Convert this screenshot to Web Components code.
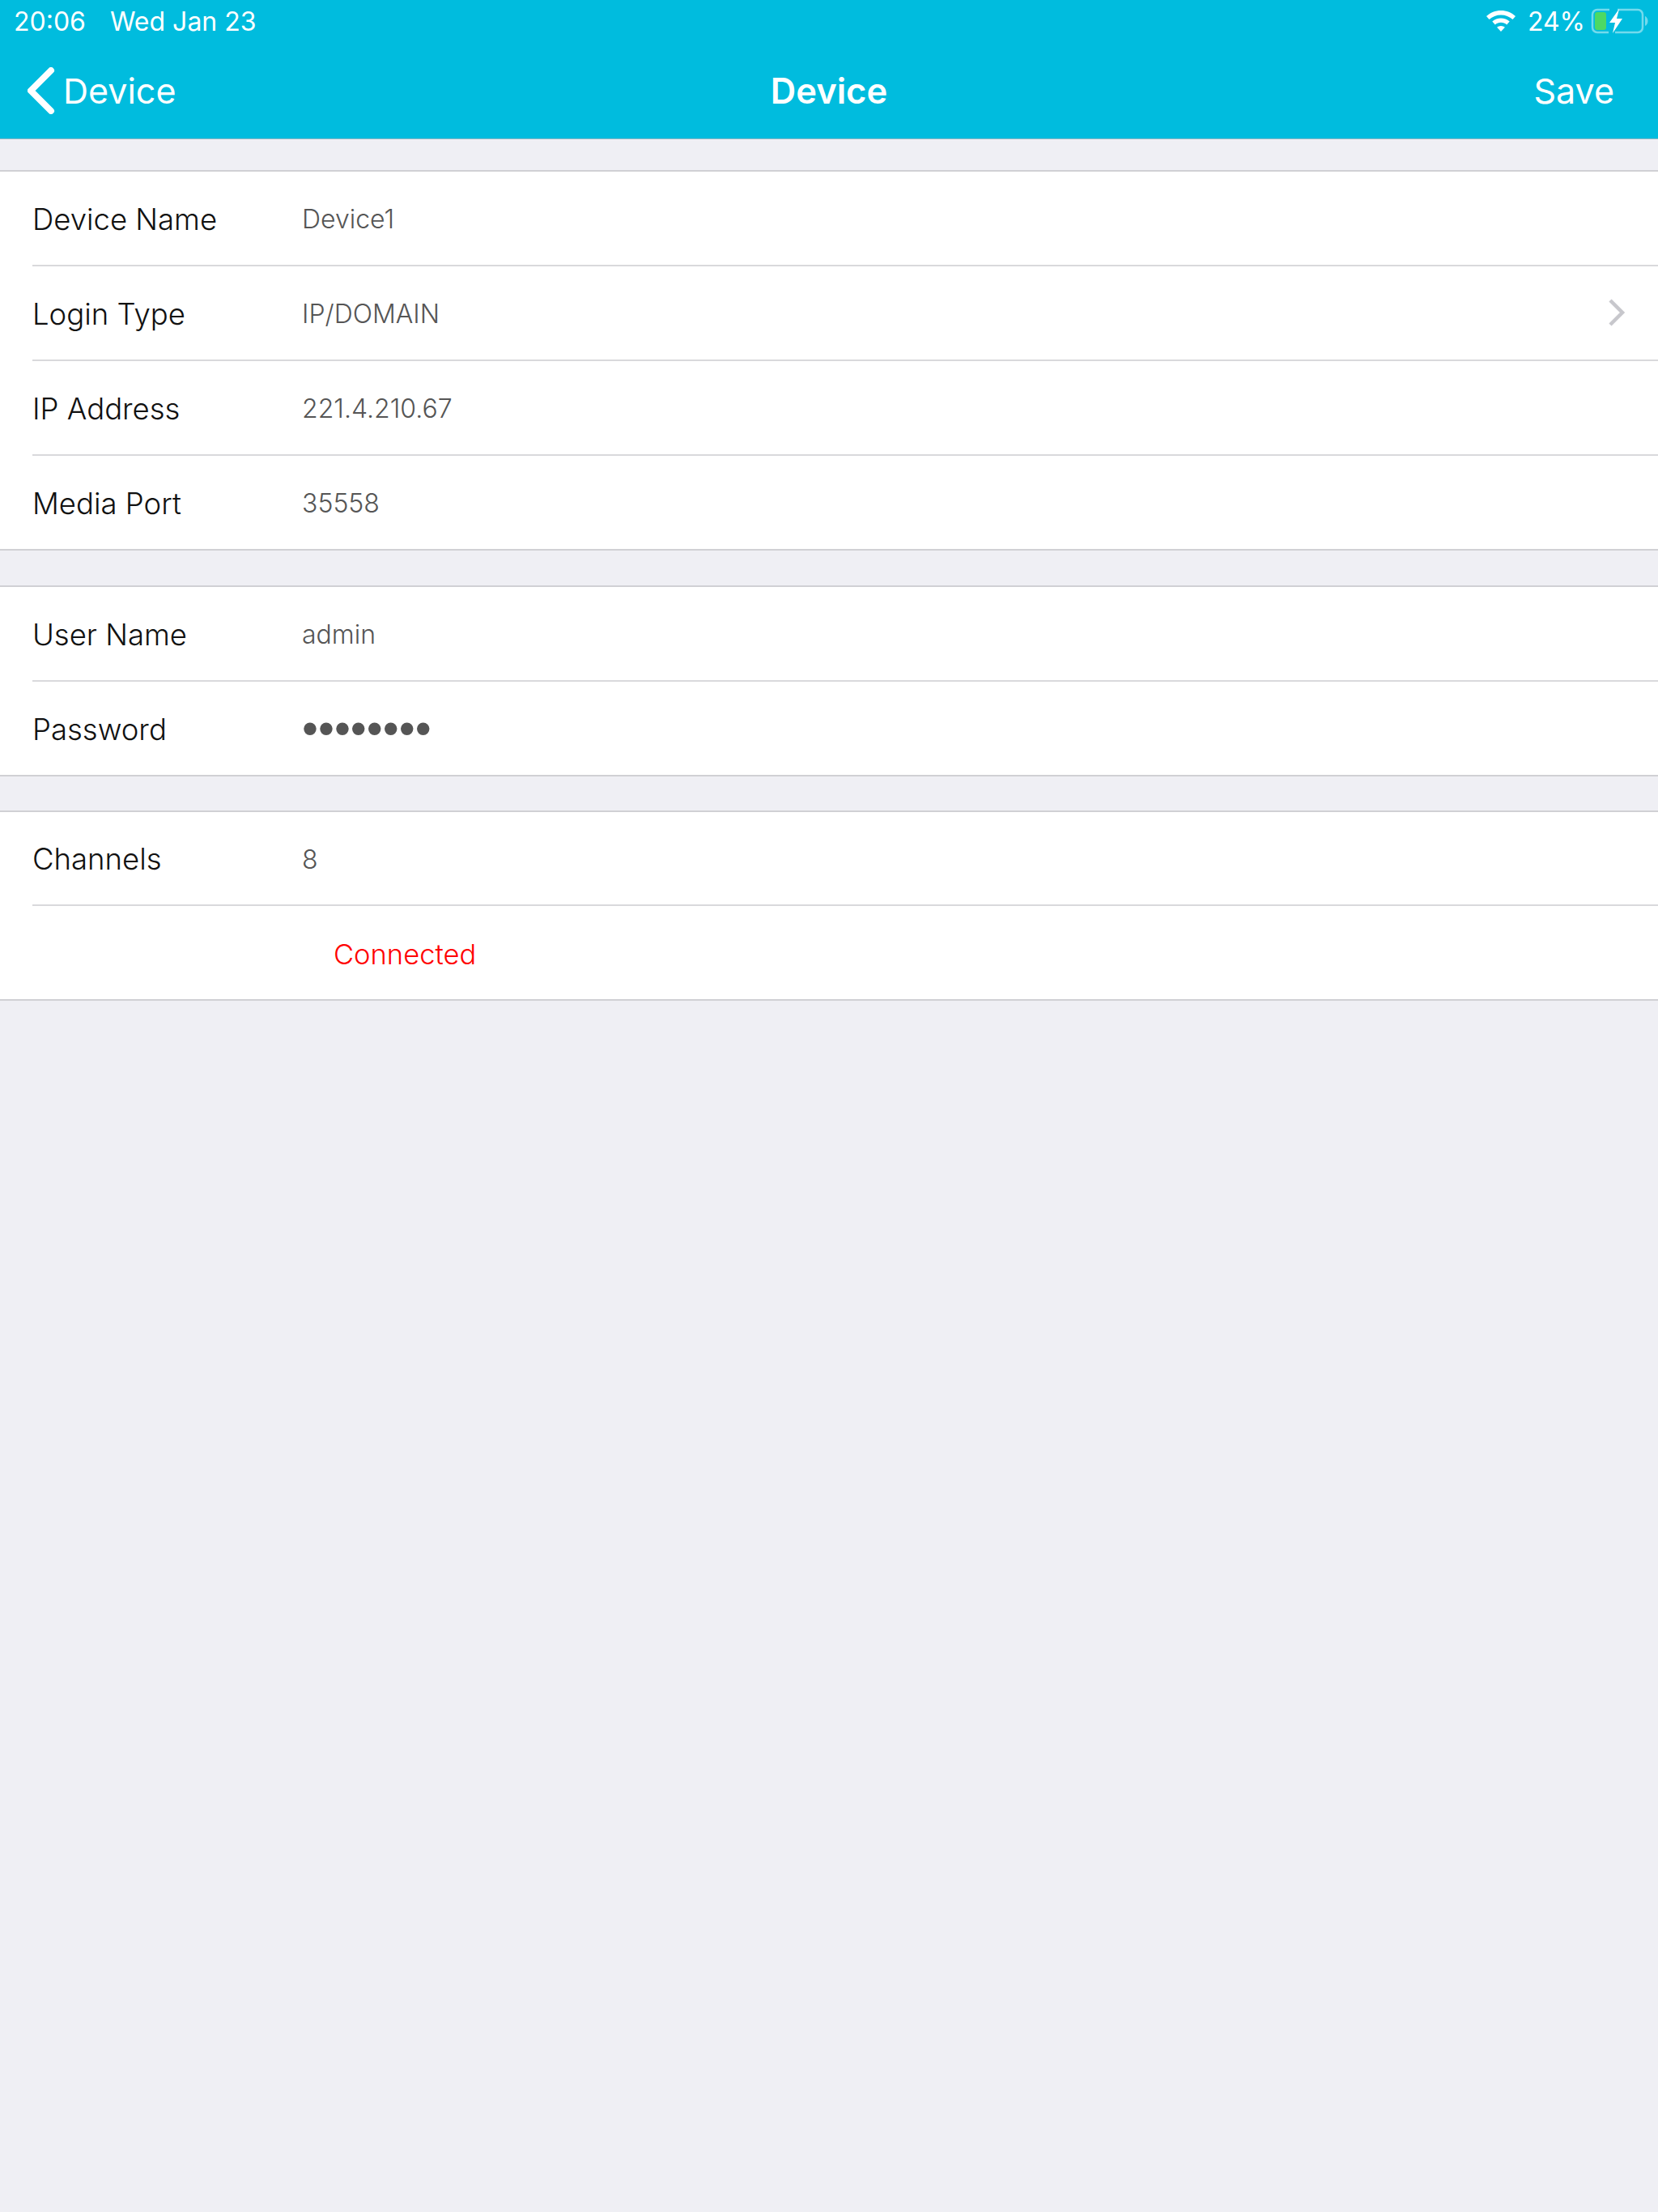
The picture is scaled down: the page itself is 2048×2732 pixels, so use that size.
<!DOCTYPE html>
<html>
<head>
<meta charset="utf-8">
<title>Device</title>
<style>
  html, body { margin: 0; background: #efeff4; }
  body { width: 2048px; height: 2732px; overflow: hidden; font-family: Inter, "Liberation Sans", sans-serif; }
  form-group { margin-top: 38px; }
  form-group + form-group { margin-top: 42px; }
</style>
</head>
<body>
  <app-header>
    <span slot="time">20:06</span>
    <span slot="date">Wed Jan 23</span>
    <span slot="battery">24%</span>
    <span slot="back">Device</span>
    <span slot="title">Device</span>
    <span slot="action">Save</span>
  </app-header>

  <form-group>
    <form-row label="Device Name">Device1</form-row>
    <form-row label="Login Type" chevron>IP/DOMAIN</form-row>
    <form-row label="IP Address">221.4.210.67</form-row>
    <form-row label="Media Port">35558</form-row>
  </form-group>

  <form-group style="margin-top: 43px">
    <form-row label="User Name">admin</form-row>
    <form-row label="Password" secret>••••••••</form-row>
  </form-group>

  <form-group>
    <form-row label="Channels" style="--row-h: 114px">8</form-row>
    <form-row status>Connected</form-row>
  </form-group>

<script>
class AppHeader extends HTMLElement {
  constructor() {
    super();
    this.attachShadow({mode: 'open'});
    this.shadowRoot.innerHTML = `
      <style>
        :host { display: block; background: #00bcde; color: #fff; border-bottom: 1px solid #8fb6c4; height: 172px; box-sizing: border-box; }
        .status { height: 52px; display: flex; align-items: center; padding: 0 12px 0 17px; font-size: 32px; }
        .date { margin-left: 30px; }
        .right { margin-left: auto; display: flex; align-items: center; }
        .wifi { width: 38px; height: 28px; margin-right: 14px; }
        .batt { width: 72px; height: 34px; margin-left: 6px; }
        .nav { height: 118px; padding: 2px 54px 0 34px; box-sizing: border-box; display: grid; grid-template-columns: 1fr auto 1fr; align-items: center; font-size: 43px; }
        .back { display: flex; align-items: center; gap: 10px; }
        .back svg { width: 34px; height: 58px; }
        .title { font-size: 43.500px; font-weight: 600; transform: translateX(10px); }
        .action { justify-self: end; }
      </style>
      <div class="status">
        <slot name="time"></slot>
        <span class="date"><slot name="date"></slot></span>
        <div class="right">
          <svg class="wifi" viewBox="0 0 38 28">
            <path fill="#fff" d="M19 1C12 1 6 3.500 1 8l3.500 4C8.500 8.500 13.500 6.500 19 6.500S29.500 8.500 33.500 12L37 8C32 3.500 26 1 19 1zM19 10.500c-4 0-7.700 1.400-10.700 4l3.500 4c2-1.700 4.500-2.700 7.200-2.700s5.200 1 7.200 2.700l3.500-4c-3-2.600-6.700-4-10.700-4zM19 20c-1.900 0-3.600.7-4.900 1.800L19 27l4.900-5.200C22.600 20.700 20.900 20 19 20z"/>
          </svg>
          <slot name="battery"></slot>
          <svg class="batt" viewBox="0 0 72 34">
            <path fill="none" stroke="#fff" stroke-opacity=".45" stroke-width="2.500" d="M24 3H9a6 6 0 0 0-6 6v16a6 6 0 0 0 6 6h14M34 3h25a6 6 0 0 1 6 6v16a6 6 0 0 1-6 6H31"/>
            <path fill="#fff" fill-opacity=".45" d="M68 11c2 .8 3.500 3 3.500 6s-1.500 5.200-3.500 6z"/>
            <rect x="6" y="6" width="14" height="22" rx="3" fill="#4cd964"/>
            <path fill="#fff" d="M36 2 24 19h7l-3 13 12-18h-7z"/>
          </svg>
        </div>
      </div>
      <div class="nav">
        <div class="back">
          <svg viewBox="0 0 34 58"><path fill="none" stroke="#fff" stroke-width="8" stroke-linecap="round" stroke-linejoin="round" d="M29 4 4 29l25 25"/></svg>
          <slot name="back"></slot>
        </div>
        <div class="title"><slot name="title"></slot></div>
        <div class="action"><slot name="action"></slot></div>
      </div>
    `;
  }
}
customElements.define('app-header', AppHeader);

class FormGroup extends HTMLElement {
  constructor() {
    super();
    this.attachShadow({mode: 'open'});
    this.shadowRoot.innerHTML = `
      <style>
        :host { display: block; background: #fff; border-top: 2px solid #d0d0d4; border-bottom: 2px solid #d0d0d4; }
      </style>
      <slot></slot>
    `;
  }
}
customElements.define('form-group', FormGroup);

class FormRow extends HTMLElement {
  constructor() {
    super();
    this.attachShadow({mode: 'open'});
    const label = this.getAttribute('label') || '';
    const chevron = this.hasAttribute('chevron')
      ? `<svg class="chevron" viewBox="0 0 24 36"><path fill="none" stroke="#c7c7cc" stroke-width="4.500" d="M3 3l15 15L3 33"/></svg>`
      : '';
    this.shadowRoot.innerHTML = `
      <style>
        :host { display: block; padding-left: 40px; }
        :host(:not(:last-child)) .row { border-bottom: 2px solid #d9d9dc; }
        .row { height: var(--row-h, 115px); display: flex; align-items: center; padding-right: 38px; }
        .label { width: 333px; font-size: 36.500px; font-weight: 350; color: #111; padding-top: 2px; }
        .value { flex: 1; font-size: 32px; font-weight: 350; color: #555; padding-top: 2px; }
        :host([secret]) .value { font-family: "Liberation Sans", sans-serif; font-size: 57px; line-height: 1; padding-top: 0; }
        :host([status]) .label { width: 372px; }
        :host([status]) .value { font-size: 34.500px; color: #ff0000; padding-top: 4px; }
        .chevron { width: 24px; height: 36px; margin-top: -2px; }
      </style>
      <div class="row">
        <span class="label">${label}</span>
        <span class="value"><slot></slot></span>
        ${chevron}
      </div>
    `;
  }
}
customElements.define('form-row', FormRow);
</script>
</body>
</html>
